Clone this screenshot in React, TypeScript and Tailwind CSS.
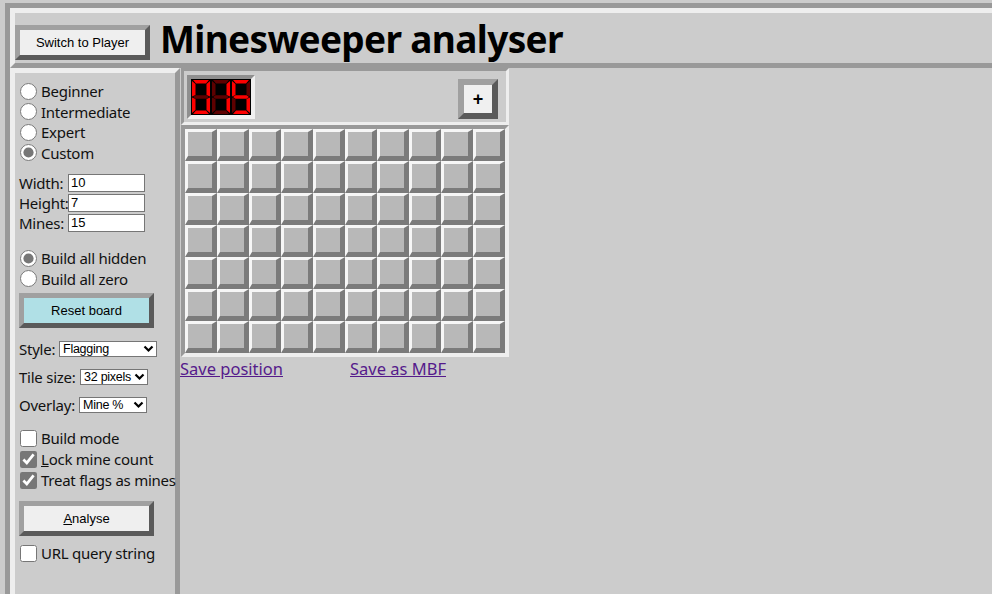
import React from "react";

// 7 segment LED pieces, 18x34 box
const SEGS: Record<string, string> = {
  a: "1,0 17,0 14,3.5 4,3.5",
  b: "18,1 18,16.5 14.5,15 14.5,4",
  c: "18,17.5 18,33 14.5,30 14.5,19",
  d: "1,34 4,30.5 14,30.5 17,34",
  e: "0,17.5 3.5,19 3.5,30 0,33",
  f: "0,1 3.5,4 3.5,15 0,16.5",
  g: "1,17 3.5,15.2 14.5,15.2 17,17 14.5,18.8 3.5,18.8",
};

const DIGITS: Record<string, string> = { "0": "abcdef", "1": "bc", "5": "afgcd" };

function Digit({ d }: { d: string }) {
  return (
    <svg width="18" height="34" viewBox="0 0 18 34">
      {Object.entries(SEGS).map(([k, pts]) => (
        <polygon key={k} points={pts} fill={DIGITS[d].includes(k) ? "#ff0000" : "#5e0000"} />
      ))}
    </svg>
  );
}

function Chevron() {
  return (
    <svg width="11" height="8" viewBox="0 0 11 8" className="shrink-0">
      <polyline points="1.5,1.5 5.5,5.5 9.5,1.5" fill="none" stroke="#000" strokeWidth="2.2" />
    </svg>
  );
}

function FakeSelect({ value, width }: { value: string; width: string }) {
  return (
    <div className={`${width} h-[16px] bg-white border border-[#767676] flex items-center justify-between pl-[3px] pr-[2px] text-[12.5px] leading-none whitespace-nowrap overflow-hidden font-['Liberation_Sans',sans-serif] text-black`}>
      <span>{value}</span>
      <Chevron />
    </div>
  );
}

function Radio({ label, checked, name }: { label: string; checked?: boolean; name: string }) {
  return (
    <label className="flex items-center h-[20.5px] whitespace-nowrap">
      <input type="radio" name={name} defaultChecked={checked} className="m-0 ml-[1px] w-[17px] h-[17px] shrink-0 accent-[#777]" />
      <span className="ml-[4px]">{label}</span>
    </label>
  );
}

function Check({ children, checked }: { children: React.ReactNode; checked?: boolean }) {
  return (
    <label className="flex items-center h-[21px] whitespace-nowrap">
      <input type="checkbox" defaultChecked={checked} className="m-0 ml-[1px] w-[17px] h-[17px] shrink-0 accent-[#777]" />
      <span className="ml-[4px]">{children}</span>
    </label>
  );
}

export default function App() {
  const tiles = Array(70).fill(0);

  return (
    <div className="w-[992px] h-[594px] overflow-hidden bg-[#cccccc] pt-[3px] pl-[5px] font-['Noto_Sans',sans-serif] text-[#111]">

      {/* outer frame */}
      <div className="w-[1100px] min-h-[700px] flex flex-col border-t-[5px] border-l-[5px] border-[#999999]">

        {/* header */}
        <div className="h-[60px] shrink-0 flex items-start border-[5px] border-t-[#eeeeee] border-l-[#eeeeee] border-b-[#999999] border-r-[#999999]">
          <button className="mt-[12px] w-[135px] h-[35px] bg-[#efefef] border-[5px] border-t-[#a0a0a0] border-l-[#a0a0a0] border-b-[#5a5a5a] border-r-[#5a5a5a] text-[13px] font-['Liberation_Sans',sans-serif] text-black">
            Switch to Player
          </button>
          <h1 className="ml-[10px] mt-[7px] text-[37px] leading-[38px] tracking-[-0.65px] font-bold text-black whitespace-nowrap">
            Minesweeper analyser
          </h1>
        </div>

        <div className="flex flex-1">

          {/* sidebar */}
          <aside className="w-[170px] shrink-0 border-t-[5px] border-l-[5px] border-r-[5px] border-t-[#eeeeee] border-l-[#eeeeee] border-r-[#999999] pl-[4px] pt-[8px] text-[15px] tracking-[-0.25px]">

            <Radio name="level" label="Beginner" />
            <Radio name="level" label="Intermediate" />
            <Radio name="level" label="Expert" />
            <Radio name="level" label="Custom" checked />

            <div className="mt-[10px]">
              {[["Width:", "10"], ["Height:", "7"], ["Mines:", "15"]].map(([l, v]) => (
                <div key={l} className="flex items-center h-[20px]">
                  <span className="w-[49px] shrink-0 whitespace-nowrap">{l}</span>
                  <input
                    defaultValue={v}
                    className="w-[77px] h-[18px] bg-white border border-[#767676] px-[2px] text-[13px] tracking-normal text-black font-['Liberation_Sans',sans-serif] outline-none"
                  />
                </div>
              ))}
            </div>

            <div className="mt-[15px]">
              <Radio name="build" label="Build all hidden" checked />
              <Radio name="build" label="Build all zero" />
            </div>

            <button className="mt-[4px] w-[135px] h-[35px] bg-[#b0e0e6] border-[5px] border-t-[#a0a0a0] border-l-[#a0a0a0] border-b-[#5a5a5a] border-r-[#5a5a5a] text-[13px] tracking-normal font-['Liberation_Sans',sans-serif] text-black">
              Reset board
            </button>

            <div className="mt-[13px] flex items-center h-[16px]">
              <span className="w-[40px] shrink-0">Style:</span>
              <FakeSelect value="Flagging" width="w-[98px]" />
            </div>
            <div className="mt-[12px] flex items-center h-[16px]">
              <span className="w-[61px] shrink-0 whitespace-nowrap">Tile size:</span>
              <FakeSelect value="32 pixels" width="w-[68px]" />
            </div>
            <div className="mt-[12px] flex items-center h-[16px]">
              <span className="w-[60px] shrink-0">Overlay:</span>
              <FakeSelect value="Mine %" width="w-[68px]" />
            </div>

            <div className="mt-[14.5px]">
              <Check>Build mode</Check>
              <Check checked><u>L</u>ock mine count</Check>
              <Check checked>Treat flags as mines</Check>
            </div>

            <button className="mt-[10.5px] w-[135px] h-[35px] bg-[#efefef] border-[5px] border-t-[#a0a0a0] border-l-[#a0a0a0] border-b-[#5a5a5a] border-r-[#5a5a5a] text-[13px] tracking-normal font-['Liberation_Sans',sans-serif] text-black">
              <u>A</u>nalyse
            </button>

            <div className="mt-[6.5px]">
              <Check>URL query string</Check>
            </div>
          </aside>

          {/* board */}
          <main className="flex flex-col">
            <div className="ml-[1px] w-[328px]">

              <div className="h-[57px] flex items-center justify-between border-[3px] border-t-[#999999] border-l-[#999999] border-b-[#eeeeee] border-r-[#eeeeee] pl-[3px] pr-[8px]">
                <div className="w-[68px] h-[44px] border-[4px] border-t-[#8f8f8f] border-l-[#8f8f8f] border-b-[#f0f0f0] border-r-[#f0f0f0] bg-black flex items-center justify-center gap-[2px]">
                  <Digit d="0" />
                  <Digit d="1" />
                  <Digit d="5" />
                </div>
                <button className="mt-[4px] w-[40px] h-[40px] bg-[#f0f0f0] border-[6px] border-t-[#a0a0a0] border-l-[#a0a0a0] border-b-[#5a5a5a] border-r-[#5a5a5a] flex items-center justify-center text-[18px] font-bold leading-none text-black font-['Liberation_Sans',sans-serif]">
                  +
                </button>
              </div>

              <div className="grid grid-cols-10 w-[328px] border-[4px] border-t-[#999999] border-l-[#999999] border-b-[#eeeeee] border-r-[#eeeeee] bg-[#7b7b7b]">
                {tiles.map((_, i) => (
                  <div key={i} className="w-[32px] h-[32px] bg-[#b8b8b8] border-t-[3px] border-l-[3px] border-b-[5px] border-r-[5px] border-t-[#f6f6f6] border-l-[#f6f6f6] border-b-[#7b7b7b] border-r-[#7b7b7b]" />
                ))}
              </div>
            </div>

            <div className="flex text-[16.5px] leading-[22px] mt-[1px]">
              <a href="#" className="underline text-[#551a8b] w-[170px]">Save position</a>
              <a href="#" className="underline text-[#551a8b]">Save as MBF</a>
            </div>
          </main>
        </div>
      </div>
    </div>
  );
}
